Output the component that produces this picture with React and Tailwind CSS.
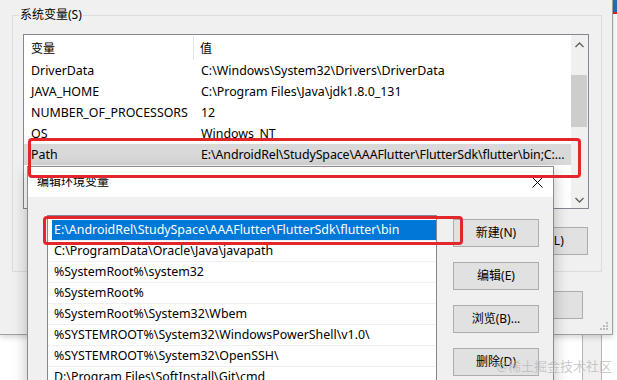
import React from 'react';

const outerRows = [
  ['DriverData', 'C:\\Windows\\System32\\Drivers\\DriverData'],
  ['JAVA_HOME', 'C:\\Program Files\\Java\\jdk1.8.0_131'],
  ['NUMBER_OF_PROCESSORS', '12'],
  ['OS', 'Windows_NT'],
  ['Path', 'E:\\AndroidRel\\StudySpace\\AAAFlutter\\FlutterSdk\\flutter\\bin;C:...'],
];

const pathItems = [
  'E:\\AndroidRel\\StudySpace\\AAAFlutter\\FlutterSdk\\flutter\\bin',
  'C:\\ProgramData\\Oracle\\Java\\javapath',
  '%SystemRoot%\\system32',
  '%SystemRoot%',
  '%SystemRoot%\\System32\\Wbem',
  '%SYSTEMROOT%\\System32\\WindowsPowerShell\\v1.0\\',
  '%SYSTEMROOT%\\System32\\OpenSSH\\',
  'D:\\Program Files\\SoftInstall\\Git\\cmd',
];

const Chevron = ({ up }) => (
  <svg width="9" height="6" viewBox="0 0 9 6" fill="none">
    <path
      d={up ? 'M0.5 5L4.5 1L8.5 5' : 'M0.5 1L4.5 5L8.5 1'}
      stroke="#606060"
      strokeWidth="1.3"
    />
  </svg>
);

const WinButton = ({ children, className = '' }) => (
  <div
    className={`flex h-[28px] w-[86px] shrink-0 items-center justify-center border border-[#adadad] bg-[#e1e1e1] text-[12px] text-black ${className}`}
  >
    {children}
  </div>
);

export default function App() {
  return (
    <div className="relative h-[380px] w-[617px] overflow-hidden bg-white font-['Noto_Sans','Noto_Sans_CJK_SC',sans-serif] text-[12.4px] leading-[16px] text-black">
      {/* page pieces behind the windows */}
      <div className="absolute left-[613px] top-0 h-[12px] w-[4px] bg-[#2b6cb6]" />
      <div className="absolute left-[613px] top-[12px] h-[2px] w-[4px] bg-[#d8282a]" />
      <div className="absolute left-[582px] top-[330px] h-[50px] w-px bg-[#b5b5b5]" />
      <div className="absolute left-[583px] top-[330px] h-[50px] w-[18px] bg-[#f0f0f0]" />
      <div className="absolute left-[601px] top-[330px] h-[50px] w-px bg-[#b5b5b5]" />

      {/* outer window: 系统变量 */}
      <div className="absolute left-0 top-0 h-[335px] w-[613px] border-b border-r border-[#a0a0a0] bg-[#f0f0f0] pl-[12px] pt-[15px] shadow-[0_2px_6px_rgba(0,0,0,0.18)]">
        <div className="relative h-[257px] w-[590px] border border-[#dcdcdc] pl-[10px] pt-[18px]">
          <span className="absolute left-[6px] top-[-9px] bg-[#f0f0f0] px-px text-[12px]">系统变量(S)</span>

          <div className="flex h-[175px] w-[566px] border border-[#828790] bg-white">
            <div className="flex flex-1 flex-col overflow-hidden">
              <div className="flex h-[25px] items-center">
                <div className="flex h-[24px] w-[170px] items-center border-r border-[#e5e5e5] pl-[7px] pt-[2px] text-[12px]">变量</div>
                <div className="pl-[6px] pt-[2px] text-[12px]">值</div>
              </div>
              {outerRows.map(([name, value]) => (
                <div
                  key={name}
                  className={`flex h-[21px] items-center whitespace-nowrap ${name === 'Path' ? 'bg-[#d9d9d9]' : ''}`}
                >
                  <div className="w-[171px] shrink-0 pl-[7px]">{name}</div>
                  <div className={`pl-[6px] ${name === 'Path' ? 'tracking-[-0.1px]' : ''}`}>{value}</div>
                </div>
              ))}
            </div>
            <div className="flex w-[17px] flex-col bg-[#f0f0f0]">
              <div className="flex h-[17px] items-center justify-center pt-[2px]">
                <Chevron up />
              </div>
              <div className="mt-[23px] h-[52px] w-[16px] bg-[#cdcdcd]" />
              <div className="flex-1" />
              <div className="flex h-[17px] items-center justify-center">
                <Chevron />
              </div>
            </div>
          </div>

          <div className="mt-[18px] flex justify-end gap-[8px] pr-[13px]">
            <WinButton className="h-[27px]">新建(W)...</WinButton>
            <WinButton className="h-[27px]">编辑(I)...</WinButton>
            <WinButton className="h-[27px]">删除(L)</WinButton>
          </div>
        </div>

        <div className="mt-[19px] flex w-[571px] justify-end gap-[8px]">
          <WinButton className="h-[27px]">确定</WinButton>
          <WinButton className="h-[27px]">取消</WinButton>
        </div>

        <svg className="absolute bottom-[3px] right-[3px]" width="10" height="10" viewBox="0 0 10 10">
          {[
            [8, 2], [8, 5], [5, 5], [8, 8], [5, 8], [2, 8],
          ].map(([x, y]) => (
            <rect key={`${x}-${y}`} x={x - 1} y={y - 1} width="2" height="2" fill="#bdbdbd" />
          ))}
        </svg>
      </div>

      {/* inner window: 编辑环境变量 */}
      <div className="absolute left-[27px] top-[166px] h-[240px] w-[527px] border border-[#8c8c8c] bg-[#f0f0f0] shadow-[0_4px_14px_rgba(0,0,0,0.25)]">
        <div className="flex h-[30px] items-start justify-between bg-white pl-[9px] pr-[10px]">
          <span className="pt-[7px] text-[12px]">编辑环境变量</span>
          <svg className="mt-[10px]" width="11" height="11" viewBox="0 0 11 11">
            <path d="M0.5 0.5L10.5 10.5M10.5 0.5L0.5 10.5" stroke="#000" strokeWidth="1" />
          </svg>
        </div>
        <div className="flex pl-[19px] pt-[18px]">
          <div className="h-[200px] w-[390px] border border-[#828790] bg-white pt-[4px]">
            {pathItems.map((item, i) => (
              <div key={item} className="flex h-[21px] border-b border-[#f0f0f0] pl-[4px] whitespace-nowrap">
                <div className={`flex flex-1 items-center pl-[2px] ${i === 0 ? 'bg-[#0078d7] text-white' : ''}`}>
                  {item}
                </div>
              </div>
            ))}
          </div>
          <div className="ml-[16px] mt-[4px] flex flex-col gap-[15px]">
            <WinButton>新建(N)</WinButton>
            <WinButton>编辑(E)</WinButton>
            <WinButton>浏览(B)...</WinButton>
            <WinButton>删除(D)</WinButton>
          </div>
        </div>
      </div>

      {/* red annotation boxes */}
      <div className="absolute left-[28px] top-[138px] h-[40px] w-[553px] rounded-[4px] border-[3px] border-[#e3262b]" />
      <div className="absolute left-[43px] top-[216px] h-[29px] w-[420px] rounded-[4px] border-[3px] border-[#e3262b]" />

      {/* watermark */}
      <div className="absolute bottom-[5px] right-[5px] text-[13px] leading-[18px] text-[#b4b4b4]/70">@稀土掘金技术社区</div>
    </div>
  );
}
